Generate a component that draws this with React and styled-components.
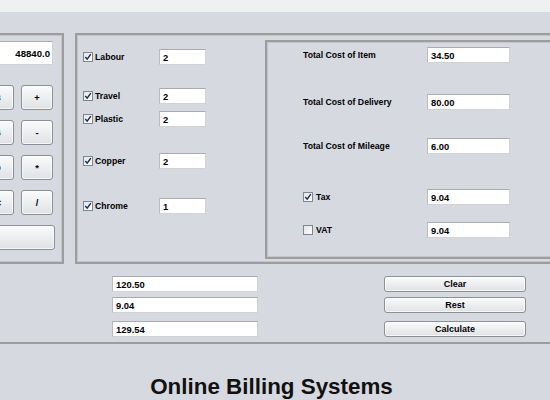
import React from "react";
import styled, { createGlobalStyle } from "styled-components";

const Global = createGlobalStyle`
  html, body { margin: 0; padding: 0; background: #d6d9df; }
  body { font-family: "Liberation Sans", Arial, sans-serif; color: #000; }
  * { box-sizing: border-box; }
`;

const Page = styled.div`
  width: 550px;
  height: 400px;
  overflow: hidden;
  background: #d6d9df;
`;

const TopStrip = styled.div`
  height: 12px;
  background: #eff0f2;
`;

const Main = styled.div`
  display: flex;
  gap: 11px;
  margin-top: 21px;
  margin-left: -120px;
  height: 231px;
`;

const Panel = styled.div`
  border: 2px solid #9d9d9d;
  box-shadow: inset 0 0 0 1px #c3c5ca;
`;

const CalcPanel = styled(Panel)`
  flex: none;
  width: 184px;
  padding: 6px 9px 0 8px;
  display: flex;
  flex-direction: column;
  align-items: flex-end;
`;

const Field = styled.div`
  background: #fff;
  border: 1px solid #d0d2d6;
  border-top-color: #a9abaf;
  border-left-color: #b9bbbf;
  width: ${(p) => p.$w}px;
  height: ${(p) => p.$h || 16}px;
  display: flex;
  align-items: center;
  justify-content: ${(p) => (p.$right ? "flex-end" : "flex-start")};
  padding: 0 3px;
  font-weight: bold;
  font-size: 9.4px;
  margin-top: ${(p) => p.$mt || 0}px;
`;

const Display = styled(Field)`
  font-size: 9.6px;
  padding-right: 2px;
`;

const KeyGrid = styled.div`
  display: grid;
  grid-template-columns: repeat(4, 32px);
  grid-auto-rows: 25px;
  column-gap: 7px;
  row-gap: 10px;
  margin-top: 20px;
`;

const Button = styled.button`
  font-family: "Liberation Sans", Arial, sans-serif;
  font-weight: bold;
  font-size: 9.4px;
  color: #000;
  border: 1px solid #8c8f94;
  border-radius: 3px;
  background: linear-gradient(#fbfbfc, #eceef0 50%, #dfe1e4);
  box-shadow: inset 0 0 0 1px rgba(255, 255, 255, 0.7);
  padding: 0;
  display: flex;
  align-items: center;
  justify-content: center;
`;

const EqualsButton = styled(Button)`
  width: 170px;
  height: 25px;
  margin-top: 10px;
  margin-right: -2px;
`;

const ItemsPanel = styled(Panel)`
  flex: none;
  width: 520px;
  display: flex;
`;

const CheckColumn = styled.div`
  flex: none;
  width: 188px;
  padding-left: 6px;
  display: flex;
  flex-direction: column;
`;

const ItemRow = styled.div`
  display: flex;
  align-items: center;
  height: 16px;
  margin-top: ${(p) => p.$mt}px;
`;

const Label = styled.span`
  font-weight: bold;
  font-size: 8.7px;
  white-space: nowrap;
  width: ${(p) => p.$w}px;
  flex: none;
`;

const Box = styled.span`
  flex: none;
  width: 10px;
  height: 10px;
  margin-right: ${(p) => p.$mr}px;
  display: inline-flex;
`;

const TotalsPanel = styled(Panel)`
  flex: none;
  width: 330px;
  margin: 5px 0 3px 0;
  padding: 5px 0 0 36px;
  display: flex;
  flex-direction: column;
`;

const BottomPanel = styled.div`
  height: 80px;
  border-bottom: 2px solid #9d9d9d;
  padding: 12px 0 0 112px;
  display: grid;
  grid-template-columns: 146px 142px;
  column-gap: 126px;
  align-content: start;
`;

const BottomCell = styled.div`
  margin-top: ${(p) => p.$mt}px;
  display: flex;
`;

const WideButton = styled(Button)`
  width: 142px;
  height: 16px;
  font-size: 9px;
`;

const Title = styled.h1`
  margin: 30px 0 0;
  padding-right: 7px;
  text-align: center;
  font-family: "Liberation Sans", Arial, sans-serif;
  font-weight: bold;
  font-size: 22.4px;
  line-height: 26px;
  color: #111;
`;

function CheckBox({ checked, mr = 3 }) {
  return (
    <Box $mr={mr}>
      <svg width="10" height="10" viewBox="0 0 10 10">
        <defs>
          <linearGradient id="cbg" x1="0" y1="0" x2="1" y2="1">
            <stop offset="0" stopColor="#dfe3e8" />
            <stop offset="1" stopColor="#ffffff" />
          </linearGradient>
        </defs>
        <rect x="0.5" y="0.5" width="9" height="9" fill="url(#cbg)" stroke="#7d8794" />
        {checked && (
          <path d="M2.3 5.0 L4.2 7.2 L7.8 2.2" fill="none" stroke="#1f2a44" strokeWidth="1.4" />
        )}
      </svg>
    </Box>
  );
}

const keys = ["1", "2", "3", "+", "4", "5", "6", "-", "7", "8", "9", "*", "0", ".", "C", "/"];

const items = [
  { name: "Labour", value: "2", mt: 14 },
  { name: "Travel", value: "2", mt: 23 },
  { name: "Plastic", value: "2", mt: 7 },
  { name: "Copper", value: "2", mt: 26 },
  { name: "Chrome", value: "1", mt: 29 },
];

const totals = [
  { name: "Total Cost of Item", value: "34.50", mt: 0 },
  { name: "Total Cost of Delivery", value: "80.00", mt: 31 },
  { name: "Total Cost of Mileage", value: "6.00", mt: 28 },
  { name: "Tax", value: "9.04", mt: 35, check: true, checked: true },
  { name: "VAT", value: "9.04", mt: 17, check: true, checked: false },
];

const bottom = [
  { value: "120.50", button: "Clear", mt: 0 },
  { value: "9.04", button: "Rest", mt: 5 },
  { value: "129.54", button: "Calculate", mt: 8 },
];

export default function App() {
  return (
    <Page>
      <Global />
      <TopStrip />
      <Main>
        <CalcPanel>
          <Display $w={159} $h={24} $right>
            48840.0
          </Display>
          <KeyGrid>
            {keys.map((k) => (
              <Button key={k}>{k}</Button>
            ))}
          </KeyGrid>
          <EqualsButton>=</EqualsButton>
        </CalcPanel>
        <ItemsPanel>
          <CheckColumn>
            {items.map((it) => (
              <ItemRow key={it.name} $mt={it.mt}>
                <CheckBox checked mr={2} />
                <Label $w={64}>{it.name}</Label>
                <Field $w={47}>{it.value}</Field>
              </ItemRow>
            ))}
          </CheckColumn>
          <TotalsPanel>
            {totals.map((t) => (
              <ItemRow key={t.name} $mt={t.mt}>
                {t.check && <CheckBox checked={t.checked} mr={3} />}
                <Label $w={t.check ? 111 : 124}>{t.name}</Label>
                <Field $w={83}>{t.value}</Field>
              </ItemRow>
            ))}
          </TotalsPanel>
        </ItemsPanel>
      </Main>
      <BottomPanel>
        {bottom.map((b) => (
          <React.Fragment key={b.button}>
            <BottomCell $mt={b.mt}>
              <Field $w={146}>{b.value}</Field>
            </BottomCell>
            <BottomCell $mt={b.mt}>
              <WideButton>{b.button}</WideButton>
            </BottomCell>
          </React.Fragment>
        ))}
      </BottomPanel>
      <Title>Online Billing Systems</Title>
    </Page>
  );
}
